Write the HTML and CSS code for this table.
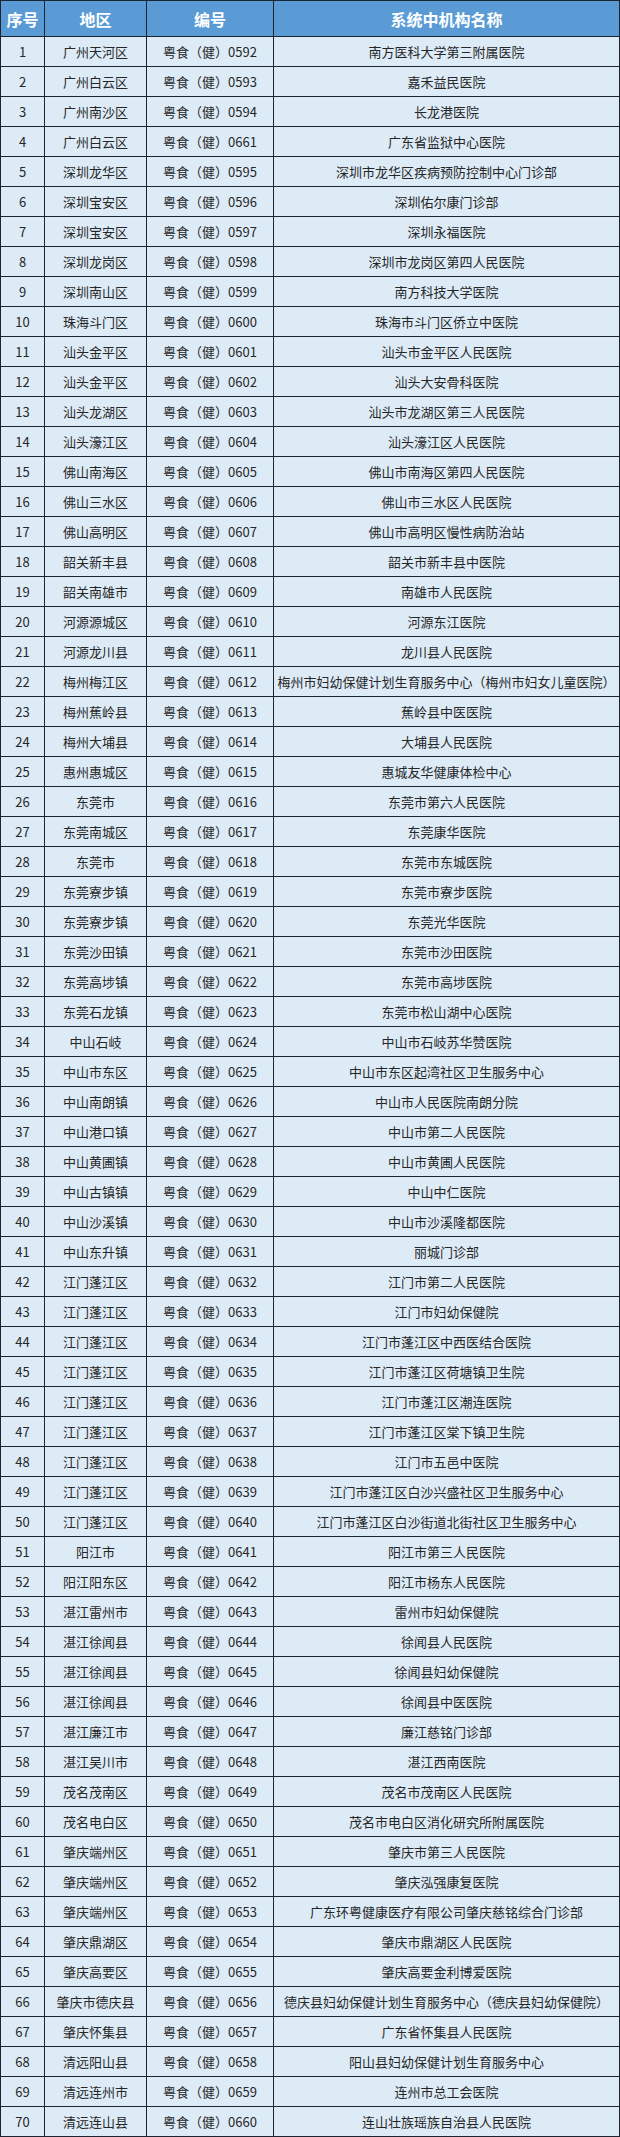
FILE: index.html
```html
<!DOCTYPE html>
<html lang="zh-CN">
<head>
<meta charset="utf-8">
<title>系统中机构名称</title>
<link rel="stylesheet" href="styles.css">
</head>
<body>
<table class="list">
<colgroup><col class="c-no"><col class="c-area"><col class="c-code"><col class="c-name"></colgroup>
<thead>
<tr><th>序号</th><th>地区</th><th>编号</th><th>系统中机构名称</th></tr>
</thead>
<tbody>
<tr><td>1</td><td>广州天河区</td><td>粤食（健）0592</td><td>南方医科大学第三附属医院</td></tr>
<tr><td>2</td><td>广州白云区</td><td>粤食（健）0593</td><td>嘉禾益民医院</td></tr>
<tr><td>3</td><td>广州南沙区</td><td>粤食（健）0594</td><td>长龙港医院</td></tr>
<tr><td>4</td><td>广州白云区</td><td>粤食（健）0661</td><td>广东省监狱中心医院</td></tr>
<tr><td>5</td><td>深圳龙华区</td><td>粤食（健）0595</td><td>深圳市龙华区疾病预防控制中心门诊部</td></tr>
<tr><td>6</td><td>深圳宝安区</td><td>粤食（健）0596</td><td>深圳佑尔康门诊部</td></tr>
<tr><td>7</td><td>深圳宝安区</td><td>粤食（健）0597</td><td>深圳永福医院</td></tr>
<tr><td>8</td><td>深圳龙岗区</td><td>粤食（健）0598</td><td>深圳市龙岗区第四人民医院</td></tr>
<tr><td>9</td><td>深圳南山区</td><td>粤食（健）0599</td><td>南方科技大学医院</td></tr>
<tr><td>10</td><td>珠海斗门区</td><td>粤食（健）0600</td><td>珠海市斗门区侨立中医院</td></tr>
<tr><td>11</td><td>汕头金平区</td><td>粤食（健）0601</td><td>汕头市金平区人民医院</td></tr>
<tr><td>12</td><td>汕头金平区</td><td>粤食（健）0602</td><td>汕头大安骨科医院</td></tr>
<tr><td>13</td><td>汕头龙湖区</td><td>粤食（健）0603</td><td>汕头市龙湖区第三人民医院</td></tr>
<tr><td>14</td><td>汕头濠江区</td><td>粤食（健）0604</td><td>汕头濠江区人民医院</td></tr>
<tr><td>15</td><td>佛山南海区</td><td>粤食（健）0605</td><td>佛山市南海区第四人民医院</td></tr>
<tr><td>16</td><td>佛山三水区</td><td>粤食（健）0606</td><td>佛山市三水区人民医院</td></tr>
<tr><td>17</td><td>佛山高明区</td><td>粤食（健）0607</td><td>佛山市高明区慢性病防治站</td></tr>
<tr><td>18</td><td>韶关新丰县</td><td>粤食（健）0608</td><td>韶关市新丰县中医院</td></tr>
<tr><td>19</td><td>韶关南雄市</td><td>粤食（健）0609</td><td>南雄市人民医院</td></tr>
<tr><td>20</td><td>河源源城区</td><td>粤食（健）0610</td><td>河源东江医院</td></tr>
<tr><td>21</td><td>河源龙川县</td><td>粤食（健）0611</td><td>龙川县人民医院</td></tr>
<tr><td>22</td><td>梅州梅江区</td><td>粤食（健）0612</td><td>梅州市妇幼保健计划生育服务中心（梅州市妇女儿童医院）</td></tr>
<tr><td>23</td><td>梅州蕉岭县</td><td>粤食（健）0613</td><td>蕉岭县中医医院</td></tr>
<tr><td>24</td><td>梅州大埔县</td><td>粤食（健）0614</td><td>大埔县人民医院</td></tr>
<tr><td>25</td><td>惠州惠城区</td><td>粤食（健）0615</td><td>惠城友华健康体检中心</td></tr>
<tr><td>26</td><td>东莞市</td><td>粤食（健）0616</td><td>东莞市第六人民医院</td></tr>
<tr><td>27</td><td>东莞南城区</td><td>粤食（健）0617</td><td>东莞康华医院</td></tr>
<tr><td>28</td><td>东莞市</td><td>粤食（健）0618</td><td>东莞市东城医院</td></tr>
<tr><td>29</td><td>东莞寮步镇</td><td>粤食（健）0619</td><td>东莞市寮步医院</td></tr>
<tr><td>30</td><td>东莞寮步镇</td><td>粤食（健）0620</td><td>东莞光华医院</td></tr>
<tr><td>31</td><td>东莞沙田镇</td><td>粤食（健）0621</td><td>东莞市沙田医院</td></tr>
<tr><td>32</td><td>东莞高埗镇</td><td>粤食（健）0622</td><td>东莞市高埗医院</td></tr>
<tr><td>33</td><td>东莞石龙镇</td><td>粤食（健）0623</td><td>东莞市松山湖中心医院</td></tr>
<tr><td>34</td><td>中山石岐</td><td>粤食（健）0624</td><td>中山市石岐苏华赞医院</td></tr>
<tr><td>35</td><td>中山市东区</td><td>粤食（健）0625</td><td>中山市东区起湾社区卫生服务中心</td></tr>
<tr><td>36</td><td>中山南朗镇</td><td>粤食（健）0626</td><td>中山市人民医院南朗分院</td></tr>
<tr><td>37</td><td>中山港口镇</td><td>粤食（健）0627</td><td>中山市第二人民医院</td></tr>
<tr><td>38</td><td>中山黄圃镇</td><td>粤食（健）0628</td><td>中山市黄圃人民医院</td></tr>
<tr><td>39</td><td>中山古镇镇</td><td>粤食（健）0629</td><td>中山中仁医院</td></tr>
<tr><td>40</td><td>中山沙溪镇</td><td>粤食（健）0630</td><td>中山市沙溪隆都医院</td></tr>
<tr><td>41</td><td>中山东升镇</td><td>粤食（健）0631</td><td>丽城门诊部</td></tr>
<tr><td>42</td><td>江门蓬江区</td><td>粤食（健）0632</td><td>江门市第二人民医院</td></tr>
<tr><td>43</td><td>江门蓬江区</td><td>粤食（健）0633</td><td>江门市妇幼保健院</td></tr>
<tr><td>44</td><td>江门蓬江区</td><td>粤食（健）0634</td><td>江门市蓬江区中西医结合医院</td></tr>
<tr><td>45</td><td>江门蓬江区</td><td>粤食（健）0635</td><td>江门市蓬江区荷塘镇卫生院</td></tr>
<tr><td>46</td><td>江门蓬江区</td><td>粤食（健）0636</td><td>江门市蓬江区潮连医院</td></tr>
<tr><td>47</td><td>江门蓬江区</td><td>粤食（健）0637</td><td>江门市蓬江区棠下镇卫生院</td></tr>
<tr><td>48</td><td>江门蓬江区</td><td>粤食（健）0638</td><td>江门市五邑中医院</td></tr>
<tr><td>49</td><td>江门蓬江区</td><td>粤食（健）0639</td><td>江门市蓬江区白沙兴盛社区卫生服务中心</td></tr>
<tr><td>50</td><td>江门蓬江区</td><td>粤食（健）0640</td><td>江门市蓬江区白沙街道北街社区卫生服务中心</td></tr>
<tr><td>51</td><td>阳江市</td><td>粤食（健）0641</td><td>阳江市第三人民医院</td></tr>
<tr><td>52</td><td>阳江阳东区</td><td>粤食（健）0642</td><td>阳江市杨东人民医院</td></tr>
<tr><td>53</td><td>湛江雷州市</td><td>粤食（健）0643</td><td>雷州市妇幼保健院</td></tr>
<tr><td>54</td><td>湛江徐闻县</td><td>粤食（健）0644</td><td>徐闻县人民医院</td></tr>
<tr><td>55</td><td>湛江徐闻县</td><td>粤食（健）0645</td><td>徐闻县妇幼保健院</td></tr>
<tr><td>56</td><td>湛江徐闻县</td><td>粤食（健）0646</td><td>徐闻县中医医院</td></tr>
<tr><td>57</td><td>湛江廉江市</td><td>粤食（健）0647</td><td>廉江慈铭门诊部</td></tr>
<tr><td>58</td><td>湛江吴川市</td><td>粤食（健）0648</td><td>湛江西南医院</td></tr>
<tr><td>59</td><td>茂名茂南区</td><td>粤食（健）0649</td><td>茂名市茂南区人民医院</td></tr>
<tr><td>60</td><td>茂名电白区</td><td>粤食（健）0650</td><td>茂名市电白区消化研究所附属医院</td></tr>
<tr><td>61</td><td>肇庆端州区</td><td>粤食（健）0651</td><td>肇庆市第三人民医院</td></tr>
<tr><td>62</td><td>肇庆端州区</td><td>粤食（健）0652</td><td>肇庆泓强康复医院</td></tr>
<tr><td>63</td><td>肇庆端州区</td><td>粤食（健）0653</td><td>广东环粤健康医疗有限公司肇庆慈铭综合门诊部</td></tr>
<tr><td>64</td><td>肇庆鼎湖区</td><td>粤食（健）0654</td><td>肇庆市鼎湖区人民医院</td></tr>
<tr><td>65</td><td>肇庆高要区</td><td>粤食（健）0655</td><td>肇庆高要金利博爱医院</td></tr>
<tr><td>66</td><td>肇庆市德庆县</td><td>粤食（健）0656</td><td>德庆县妇幼保健计划生育服务中心（德庆县妇幼保健院）</td></tr>
<tr><td>67</td><td>肇庆怀集县</td><td>粤食（健）0657</td><td>广东省怀集县人民医院</td></tr>
<tr><td>68</td><td>清远阳山县</td><td>粤食（健）0658</td><td>阳山县妇幼保健计划生育服务中心</td></tr>
<tr><td>69</td><td>清远连州市</td><td>粤食（健）0659</td><td>连州市总工会医院</td></tr>
<tr><td>70</td><td>清远连山县</td><td>粤食（健）0660</td><td>连山壮族瑶族自治县人民医院</td></tr>
</tbody>
</table>
</body>
</html>
```

FILE: styles.css
```css
html, body {
  margin: 0;
  padding: 0;
  background: #ffffff;
}

.list {
  width: 620px;
  table-layout: fixed;
  border-collapse: separate;
  border-spacing: 0;
  border-top: 1px solid #1c2430;
  border-left: 1px solid #1c2430;
  font-family: "Microsoft YaHei", "Noto Sans CJK SC", "Noto Sans", sans-serif;
}

.c-no { width: 44px; }
.c-area { width: 102px; }
.c-code { width: 127px; }
.c-name { width: 346px; }

.list th,
.list td {
  box-sizing: border-box;
  padding: 0;
  border-right: 1px solid #1c2430;
  border-bottom: 1px solid #1c2430;
  text-align: center;
  vertical-align: middle;
  white-space: nowrap;
  overflow: hidden;
}

.list th {
  height: 36px;
  background: #5b9bd5;
  color: #ffffff;
  font-size: 16px;
  font-weight: bold;
}

.list td {
  height: 30px;
  background: #ddebf7;
  color: #262626;
  font-size: 13px;
  font-weight: normal;
}
```
